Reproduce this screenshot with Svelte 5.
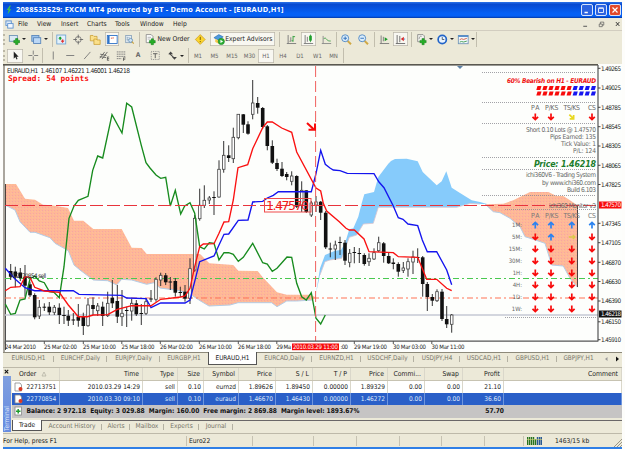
<script>
  // Toolbar entries: x is the left edge and w the width, both in window pixels.
  const bar1 = [
    { k: 'grip', x: 3, w: 2 }, { k: 'newchart', x: 7, w: 14 }, { k: 'drop', x: 21, w: 5 },
    { k: 'profiles', x: 29, w: 14 }, { k: 'drop', x: 43, w: 5 }, { k: 'sep', x: 52, w: 2 },
    { k: 'market', x: 54, w: 14 }, { k: 'target', x: 71, w: 14 }, { k: 'folders', x: 88, w: 14 },
    { k: 'nav', x: 105, w: 14, on: true }, { k: 'tester', x: 122, w: 14 }, { k: 'sep', x: 139, w: 2 },
    { k: 'order', x: 143, w: 14 }, { k: 'text', x: 157, w: 33, t: 'New Order' }, { k: 'warn', x: 193, w: 14 },
    { k: 'ea', x: 210, w: 65, on: true, t: 'Expert Advisors' },
    { k: 'sep', x: 279, w: 2 }, { k: 'bars', x: 284, w: 14 }, { k: 'candles', x: 301, w: 15, on: true },
    { k: 'linechart', x: 319, w: 14 }, { k: 'sep', x: 336, w: 2 }, { k: 'zoomin', x: 339, w: 14 },
    { k: 'zoomout', x: 356, w: 14 }, { k: 'sep', x: 374, w: 2 }, { k: 'scroll', x: 377, w: 14 },
    { k: 'shift', x: 393, w: 15, on: true }, { k: 'sep', x: 411, w: 2 }, { k: 'indic', x: 414, w: 14 },
    { k: 'drop', x: 428, w: 5 }, { k: 'clock', x: 435, w: 14 }, { k: 'drop', x: 449, w: 5 },
    { k: 'template', x: 456, w: 14 }, { k: 'drop', x: 470, w: 5 }, { k: 'sep', x: 476, w: 2 }
  ];
  const bar2 = [
    { k: 'grip', x: 3, w: 2 }, { k: 'cursor', x: 7, w: 16, on: true }, { k: 'cross', x: 26, w: 14 },
    { k: 'sep', x: 42, w: 2 }, { k: 'vline', x: 46, w: 14 }, { k: 'hline', x: 63, w: 14 },
    { k: 'trend', x: 80, w: 14 }, { k: 'channel', x: 97, w: 14 }, { k: 'fibo', x: 114, w: 14 },
    { k: 'text', x: 131, w: 14, t: 'A', b: true }, { k: 'label', x: 148, w: 14 }, { k: 'arrows', x: 165, w: 14 },
    { k: 'drop', x: 179, w: 5 }, { k: 'sep', x: 188, w: 2 },
    { k: 'tf', x: 190, w: 16, t: 'M1' }, { k: 'tf', x: 206, w: 17, t: 'M5' }, { k: 'tf', x: 223, w: 18, t: 'M15' },
    { k: 'tf', x: 241, w: 17, t: 'M30' }, { k: 'tf', x: 258, w: 16, t: 'H1', on: true }, { k: 'tf', x: 275, w: 16, t: 'H4' },
    { k: 'tf', x: 292, w: 16, t: 'D1' }, { k: 'tf', x: 309, w: 17, t: 'W1' }, { k: 'tf', x: 326, w: 15, t: 'MN' },
    { k: 'sep', x: 343, w: 2 }
  ];
  const gapped = (items, start = 3) => items.map((it, i) => ({
    ...it, gap: it.x - (i ? items[i - 1].x + items[i - 1].w : start)
  }));

  // time position, high, low, body top, body bottom, filled
  const candles = [
    [10.7,264,280,271,276.7,1],[15.3,266.7,287.3,271.5,276.7,1],[20.3,268,281,272.5,278,1],[25,265,296.7,277.3,285.7,1],
    [30,281.7,297,284.3,295.3,1],[34.7,293.3,319.3,295,317.3,1],[39.3,300,319,307.3,316,0],[44.3,303.3,311,306.7,307.7,1],
    [49.3,302,315,306.7,312.3,1],[54.3,305,315,307.3,312.3,0],[59.3,303.3,324,307.7,315,1],[64,306.7,324,315,316,1],
    [68.3,310,326,315.7,320.7,1],[73.3,313,325,319.5,320.5,1],[78.3,304,326.7,316.7,320.7,1],[83.3,312.7,335,316.7,326,1],
    [88,298,326.7,305,325.7,0],[93,297.3,315,305,309,1],[97.7,303,316,306,310.7,0],[102.7,301.7,326,306.7,316,1],
    [107.7,291.7,317,303.3,315.7,0],[112.3,280,308,297.7,303.3,1],[117.3,285,323,301,316.7,1],[122,290,326,313.3,316.7,0],
    [126.7,306.7,327,310,311,1],[131.7,299,320.7,303.3,311,0],[136.3,300,316,303.3,314.3,1],[141.3,304,325,313,314,1],
    [146,298,315,301.7,313.3,0],[151,290,302,298.5,299.5,1],[156,277.3,301.7,279.3,299.3,0],[160.7,272.7,286,275.3,280,0],
    [165.7,273,285,275.3,282.3,1],[170.3,277,290,281.5,282.5,1],[175.3,278,296.7,281,292.7,1],[180.3,286.7,297,292,293,1],
    [185,285,301.7,291.7,298.7,1],[190,258.3,304,268.7,298.3,0],[194.7,215,271.7,218.3,270,0],[199.7,188.7,220.7,205.3,218.7,0],
    [204.3,185.3,208,200.3,205.3,0],[209.3,196,204,198,200,0],[214,191.3,215,197,198,1],[219,160.3,197.7,169.3,197,0],
    [223.7,141,172.7,155.3,169.3,0],[228.7,145.3,162,155.3,158,1],[233.3,127.7,163,137.3,158.7,0],[238.3,114.3,139.3,114.3,137.7,0],
    [243.3,114,133,114.3,124.7,1],[248,121.3,134.7,124.3,133.7,1],[252.7,80,119.3,103,114.3,0],[257.7,97,113.7,103,107.7,1],
    [262.7,107,128.7,108,127,1],[267.3,125,150.3,126.3,146,1],[272.3,140.3,164,146,162.7,1],[277,158.7,171,163,169,1],
    [282,162,177,168.7,176,1],[286.7,172,180.3,174,177,1],[291.7,171.3,185.3,176,181.3,0],[296.7,175.3,208,176,206.7,1],
    [301.7,181.3,212,190.3,205,0],[306.3,190.3,213,190.3,212,1],[311.3,201,217,203,215,0],[316,196,212,202,205,0],
    [320.7,201,220,201.7,212.7,1],[325.7,211,249,212.7,247.3,1],[330.3,242.7,257.3,248.5,249.5,1],[335.3,240.7,260,245,249,0],
    [340,236.7,255,242,243,1],[345,240,265,242.7,260.7,1],[349.7,249,267.3,253.3,262.3,0],[354.3,247,263.3,252,253,1],
    [359.3,248,263,253,254,1],[364.3,253.3,265.7,255,264,1],[369,253.3,266,258.3,261.7,0],[374,248.3,260,252.7,259,0],
    [378.7,236.7,252,242.7,250.7,0],[383.7,242,262.7,243.3,256,1],[388.7,252,264,256,263.3,1],[393.3,258.3,269.3,262.5,264,1],
    [398.3,262.3,276.7,264,271.7,1],[403.3,262,273,268,270.3,0],[408,258.3,276.7,261.7,269,0],[413,250.7,274,257,262,0],
    [417.7,248.3,263,257,258,1],[422.7,256,296.7,257.3,284,1],[427.3,282,311,284,297,1],[432.3,294,306,297,300.7,1],
    [437,289.3,302,291.7,300.7,0],[442,289,321,291.7,319,1],[446.7,306,328,319,324.3,1],[451.7,314,332.7,315,324.3,0]
  ];

  const chikou = '5.3,304 10.7,314.3 15.3,313.3 20,300 25,299 30,279 34.7,276 39.3,281 44.3,282.7 49.3,291.7 54,292.3 59.3,297.7 64,266.7 69,218.3 74,206 78.3,200.3 88,196.3 92.7,170.3 97.7,156 102.7,158 112,114.7 122,133 126.7,103.3 131.7,107 141.3,145.3 146,162.7 150,168 156,175 160.7,178.3 165.7,177.3 170.3,206 175.3,190.3 180.7,214 184.7,206 190,202.7 194.7,213.3 199.7,246.7 204.3,249 209.3,242.7 214,243.3 219,260 224,252.7 228.7,252.7 233.3,254.3 238.3,261.3 243.3,257.3 252.7,243.3 262.7,262.7 267.3,264 272.3,271.3 277,268.3 287,257 291.7,257.3 296.7,283.3 301.7,296.7 306.3,300 311.3,292.7 316,318.3 320.7,324 325.3,315';
  const tenkan = '5.3,290.7 10.7,287.3 20,286.7 25,276.7 30,277.3 34.7,287.3 44.3,291 59.3,292.3 68.3,305 78.3,316.7 87.3,316.7 93.3,315 107.7,314.7 117.3,309.3 131.7,305.7 151,305.7 160.7,299.3 180.7,297 185,296 190,288.3 194.7,266.7 199.7,246.7 203.3,244 214,243.7 219,233.3 224,222 228.7,221.7 233.3,200 238,167.7 247.7,164.7 252.7,148.7 262.7,127.7 267.3,122 272.3,122 281.7,128 291.7,132.3 296.7,152 316,188 320.7,191 323.3,203.3 326.7,211 339.3,221.7 346,228.3 349.3,230 354.3,230 364,239 369,251.7 393.3,252.7 398.3,256.7 417.7,257.3 426.7,279.3 436.7,279.3 446.7,288.3 451.7,290.7';
  const kijun = '5.3,268.3 15.3,279.3 25,287.7 34.7,290.7 73.3,290.7 79,294.3 121.7,295.3 126.7,298 146,298.7 151,307.7 160.7,303 185,303 190,300 199.7,261.7 214,256 219,245 224,234.3 228.7,234 238.3,220.3 248,220 252.7,202 262.7,201.3 267.3,198 273.3,195.3 278.3,191.7 311.3,191.7 316,173.7 320.7,150.3 325.3,164.3 330,168 333.3,170 340,170.7 347.3,173.3 374,173.7 379,182 384,187.7 393.3,206 398.3,217.7 403,219.3 408,224 417.7,225.7 422.3,240 427.3,251.7 436.7,251.7 446.7,270 451.7,284.7';
  const senkouTop = '5,184 16,184 25,198.7 35,199.7 43,204.7 52,205.3 68,208 74,220.7 83.3,220.7 93.3,229 121.7,229 131.7,247.7 141.7,248 146.7,254 200,254 209.3,263.3 233.3,265 238.3,270.7 257.7,271 262.7,277.3 277,292.3 286.7,294.7 311,294.7 315,297';
  const senkouLow = '313,300 296.7,301 286.7,301 277,306.7 271.7,302.7 238,302.7 230,305 209,306 200,300.7 190,294 180,290.7 160,288 154,282.7 146.7,284.3 131.7,280 121.7,279.3 116.7,285 107.7,280.7 93.3,280 80,270 74,265 68.3,250.7 55,243.3 50,237.7 35,232.3 30,232.3 20,221.7 15,210 5,205';
  const blueTop = '316,293.3 320,268.3 325,255 335,250.7 341,250 345,243.3 349.3,229.3 353.3,228.3 358.3,216.7 361.7,203.3 364.3,194.3 374,192 378.3,177 388.3,163.7 391,161 395,159 406.7,158.7 417.7,161.3 422.7,172 436.7,185.3 441.7,181.3 446.3,171.3 451.7,187.7 460,193 471.7,200.3 480,202 487,204';
  const blueLow = '480,204 470,203.5 456.7,207.3 378.3,207.3 373.3,223.3 363.3,224 356.7,235 349.3,237.3 341.7,258.3 330,260 325,261.7 320,275';
  const pinkTop = '485,204.3 503.3,203.7 513.3,200.3 530,192 548.3,192 556.7,196 563.3,196 570,200.3 577.5,205.3 577.5,287.3';
  const pinkLow = '577.5,287.3 570,278.3 563.3,266 551.7,265 545,243.3 533.3,239.3 525,236.7 520,226.7 510,218.3 500,212.7 493.3,211.7 485,204';

  const prices = [
    ['1.49265', 68.3], ['1.49025', 88], ['1.48785', 107.3], ['1.48545', 126.7], ['1.48305', 146], ['1.48065', 165.3],
    ['1.47825', 184.5], ['1.47345', 223.3], ['1.47105', 242.7], ['1.46870', 262.3], ['1.46630', 281.5], ['1.46390', 301],
    ['1.46150', 321.8], ['1.45910', 339.7]
  ];
  const dates = [
    ['24 Mar 2010', 5, 31], ['25 Mar 02:00', 44, 33], ['25 Mar 10:00', 83, 33], ['25 Mar 18:00', 121.5, 33],
    ['26 Mar 02:00', 160, 33], ['26 Mar 10:00', 199, 33], ['26 Mar 18:00', 238, 33], ['29 Ma', 276.5, 14.5],
    [':00', 340.5, 7.5], ['29 Mar 19:00', 354, 33], ['30 Mar 03:00', 393, 33], ['30 Mar 11:00', 431.5, 33]
  ];
  const info = [
    ['Short 0.10 Lots @ 1.47570', 526, 131.7], ['Pips Earned: 135', 550, 139], ['Tick Value: 1', 561, 146], ['P/L: 124', 573, 153],
    ['ichi360V6 - Trading System', 526, 177.3], ['by www.ichi360.com', 542, 184.5], ['Build 6.103', 567, 192], ['ichi360 Monitor v3', 549, 208]
  ];
  const heads = [['PA', 531, 8.5], ['P/KS', 545, 13.5], ['TS/KS', 563.5, 16.5], ['CS', 588, 8]];
  const rules = [[482, 72.5], [482, 102.5], [482, 123.5], [482, 157.5], [482, 169.5], [482, 195.5], [505, 209.5], [505, 317.5]];
  const cols = [535.3, 551, 571.8, 592];
  const monitor = [
    ['1M:', 225, 'uuuu'], ['5M:', 237, 'dusd'], ['15M:', 249, 'dddd'], ['30M:', 261, 'dddd'],
    ['1H:', 273, 'dddd'], ['4H:', 285, 'dddd'], ['1D:', 297, 'dddd'], ['1W:', 309, 'dddd']
  ];

  const tabs = [
    ['EURUSD,H1', 51], ['EURCHF,Daily', 53], ['EURJPY,Daily', 53], ['EURGBP,H1', 48], ['EURAUD,H1', 49, true],
    ['EURCAD,Daily', 55], ['EURNZD,H1', 49], ['USDCHF,Daily', 53], ['USDJPY,H4', 46], ['USDCAD,H1', 48], ['GBPUSD,H1', 49], ['GBPJPY,H1', 43]
  ];
  const head = ['Order', 'Time', 'Type', 'Size', 'Symbol', 'Price', 'S / L', 'T / P', 'Price', 'Commi...', 'Swap', 'Profit', 'Comment'];
  const rows = [
    ['22713751', '2010.03.29 14:29', 'sell', '0.10', 'eurnzd', '1.89626', '1.89450', '0.00000', '1.89329', '0.00', '0.00', '21.10', ''],
    ['22770854', '2010.03.30 09:10', 'sell', '0.10', 'euraud', '1.46670', '1.46430', '0.00000', '1.46272', '0.00', '0.00', '36.60', '']
  ];
  const statusCells = [184, 66, 61, 43, 43, 42, 43, 39];
</script>

{#snippet icon(k)}
  <svg class="icon" viewBox="0 0 14 14">
    {#if k === 'newchart'}
      <rect x="1.500" y="2.500" width="9" height="6.500" fill="#dbe9f5" stroke="#6e93b5" /><path d="M6.500 8h2V6H11v2h2v2.600h-2v2H8.500v-2h-2z" fill="#27ae27" stroke="#0c7a14" stroke-width=".6" />
    {:else if k === 'profiles'}
      <rect x="2" y="2.500" width="8" height="6.500" fill="#9cc4ee" stroke="#5a87bb" /><rect x="4" y="5" width="8" height="6.500" fill="#bcd8f6" stroke="#5a87bb" />
    {:else if k === 'market'}
      <rect x="2" y="2" width="10" height="10" fill="#e3f1fb" stroke="#72a5d5" /><path d="M3.600 6l2.200-2.500L8 6H6.700v1.300H4.900V6z" fill="#129a22" /><path d="M6.300 8.500L8.500 11l2.200-2.500H9.400V7H7.600v1.500z" fill="#e03434" />
    {:else if k === 'target'}
      <circle cx="7" cy="7" r="3.300" fill="none" stroke="#777" /><path d="M7 1.500v4M7 8.500v4M1.500 7h4M8.500 7h4" stroke="#666" />
    {:else if k === 'folders'}
      <path d="M1.500 2.500h3l1 1H9v5H1.500z" fill="#fbe08a" stroke="#c69a2a" stroke-width=".8" /><path d="M5.500 6.500h2.500l1 1h3.500v5h-7z" fill="#fbe08a" stroke="#c69a2a" stroke-width=".8" />
    {:else if k === 'nav'}
      <rect x="1.500" y="2.500" width="11" height="9" fill="#fff" stroke="#2d72c8" /><path d="M3 3v8" stroke="#2d72c8" stroke-width="2" /><path d="M5.500 5.500h1.500M8 4.500v1.500" stroke="#e05030" />
    {:else if k === 'tester'}
      <rect x="3" y="2.500" width="6.500" height="8" fill="#e5eef5" stroke="#8fa6bb" /><path d="M4 5h4M4 7h3M5 4v5" stroke="#8fa6bb" stroke-width=".6" /><circle cx="8.500" cy="8" r="2.200" fill="#cfe4f5" stroke="#6b93b8" /><path d="M10 9.500l2 2.200" stroke="#c9a13c" stroke-width="1.300" />
    {:else if k === 'order'}
      <path d="M2.500 1.500h5.500l2 2v7H2.500z" fill="#fff" stroke="#777" stroke-width=".8" /><path d="M4 4.500h4M4 6.500h3" stroke="#888" stroke-width=".7" /><path d="M6 8.200h2V6.200h2.600v2h2v2.600h-2v2H8v-2H6z" fill="#27ae27" stroke="#0c7a14" stroke-width=".5" />
    {:else if k === 'warn'}
      <path d="M7 1.500L12.500 7 7 12.500 1.500 7z" fill="#fbd52e" stroke="#c9982a" stroke-width=".8" /><path d="M7 4v3.500M7 8.700v1.300" stroke="#7a5a00" stroke-width="1.100" />
    {:else if k === 'ea'}
      <path d="M1 5l5.500-3.500L11.500 4 6.500 8z" fill="#4e9ade" stroke="#2665a6" stroke-width=".6" /><path d="M2.500 6.300v3.500l4 2V8z" fill="#f2c84c" /><circle cx="9.300" cy="9.200" r="3.500" fill="#2eaf36" stroke="#0f7d1b" stroke-width=".6" /><path d="M8.300 7.400l3 1.800-3 1.800z" fill="#fff" />
    {:else if k === 'bars'}
      <path d="M3.500 2v9.500M2 11.500h10.500M5 9h1.500V4.500" fill="none" stroke="#777" /><path d="M9 3v6.500M9 3.800h2.300M7.300 8.500H9" stroke="#2c9c38" />
    {:else if k === 'candles'}
      <path d="M3.500 2v9.500M2 11.500h10.500M6 4v5.500" fill="none" stroke="#777" /><path d="M9.500 1.500V10" stroke="#178a22" stroke-width=".8" /><rect x="8" y="2.500" width="3" height="6" rx="1" fill="#1fa02c" />
    {:else if k === 'linechart'}
      <path d="M3.500 3v8.500M2 11.500h10.500" stroke="#888" /><path d="M4 6.500c2-2.500 3 0 4 1s2 1.200 4 1.200" fill="none" stroke="#3b9d44" />
    {:else if k === 'zoomin' || k === 'zoomout'}
      <path d="M8.500 8.500l3.800 3.800" stroke="#d1a843" stroke-width="2.200" /><circle cx="5.800" cy="5.600" r="3.900" fill="#d9ecfb" stroke="#4e86c2" /><path d="M3.800 5.600h4" stroke="#2a6bb8" />
      {#if k === 'zoomin'}<path d="M5.800 3.600v4" stroke="#2a6bb8" />{/if}
    {:else if k === 'scroll'}
      <path d="M3.500 2.500v9M2 11.500h10.500M6 4v5" stroke="#777" /><path d="M7.500 4.500l3.500 2.300L7.500 9z" fill="#1e9a2a" />
    {:else if k === 'shift'}
      <path d="M3.500 2v9.500M2 11.500h10.500M6.500 3v7" stroke="#666" /><path d="M10.500 6.500h2" stroke="#3a76d0" /><path d="M11 4v5L7.600 6.500z" fill="#d92c2c" />
    {:else if k === 'indic'}
      <path d="M3 1.500h6l1.500 1.500v6.500H3z" fill="#f2f2ee" stroke="#777" stroke-width=".8" /><path d="M4.500 6.500c1-4 1.500-3 3-3" fill="none" stroke="#777" stroke-width=".7" /><path d="M5.500 8h2.300V6h2.500v2h2.200v2.600h-2.200v2.200H7.800v-2.200H5.500z" fill="#27ae27" stroke="#0c7a14" stroke-width=".5" />
    {:else if k === 'clock'}
      <circle cx="7" cy="7" r="4.600" fill="#e9f3fd" stroke="#2264c8" stroke-width="1.900" /><path d="M7 4.300V7h2.300" fill="none" stroke="#334455" stroke-width=".9" />
    {:else if k === 'template'}
      <rect x="1.500" y="2.500" width="11" height="9.200" fill="#f3f8fd" stroke="#7396b8" /><path d="M1.500 3.200h11" stroke="#4d86c6" stroke-width="1.800" /><path d="M3 7.200l2-1 2.500.7 3.500-1.200" fill="none" stroke="#d35a3a" /><path d="M3 9.900l2-.6 2.500.5 3.500-1" fill="none" stroke="#3c9a4b" />
    {:else if k === 'cursor'}
      <path d="M5.300 2.500v8l1.800-1.800 1.300 2.900 1.200-.6-1.200-2.700h2.400z" fill="#222" />
    {:else if k === 'cross'}
      <path d="M7 1.500v4.500M7 8v4.500M1.500 7H6M8 7h4.500" stroke="#777" />
    {:else if k === 'vline'}<path d="M7 2.500v9" stroke="#777" />
    {:else if k === 'hline'}<path d="M2.500 7h9" stroke="#777" />
    {:else if k === 'trend'}<path d="M3.500 11l7-8" stroke="#777" />
    {:else if k === 'channel'}
      <path d="M2 10l5.500-7M4.500 11l6-8M2.500 5.500l7 1.500M2 8.300l7 1" stroke="#555" stroke-width=".9" /><path d="M10.500 8.500v4M10.500 10.500h2M10.500 8.700h2M10.500 12.300h2" stroke="#444" stroke-width=".8" />
    {:else if k === 'fibo'}
      <path d="M2 3h10M2 5.500h10M2 8h10M2 10.500h5" stroke="#777" stroke-dasharray="1.500 .5" /><path d="M9.500 9.500v3.500M9.500 9.700h2.300M9.500 11.200h2" stroke="#444" stroke-width=".8" />
    {:else if k === 'label'}
      <rect x="2.500" y="2.500" width="9" height="9" fill="none" stroke="#888" stroke-dasharray="1 1" /><path d="M4.500 5h5M7 5v5" stroke="#555" />
    {:else if k === 'arrows'}
      <path d="M2.500 5.500L5.200 2.500l2.700 3z" fill="#444" /><path d="M4 5l4.500 4" stroke="#444" stroke-width="1.200" /><path d="M6.800 8.700h5.400L9.500 11.700z" fill="#444" />
    {/if}
  </svg>
{/snippet}

{#snippet toolbar(items)}
  <div class="toolbar">
    {#each gapped(items) as it}
      <div class="tool {it.k}" class:on={it.on} class:bold={it.b} style="width:{it.w}px;margin-left:{it.gap}px">
        {#if it.k === 'drop'}<i></i>
        {:else if it.k === 'text' || it.k === 'tf'}<span>{it.t}</span>
        {:else if it.k !== 'sep' && it.k !== 'grip'}
          {@render icon(it.k)}
          {#if it.t}<span>{it.t}</span>{/if}
        {/if}
      </div>
    {/each}
  </div>
{/snippet}

{#snippet signal(x, y, dir)}
  {#if dir === 's'}
    <path d="M{x - 3} {y}h5M{x + 1} {y - 2}l2 2l-2 2" stroke="#dcc94a" stroke-width="1.5" fill="none" />
  {:else}
    <path transform="translate({x} {y}) rotate({dir === 'u' ? 180 : dir === 'e' ? -45 : 0})"
      d="M0-3.5V2M-2.8-.2L0 2.6L2.8-.2" fill="none" stroke-width="1.7"
      stroke={dir === 'u' ? '#2b83f0' : dir === 'e' ? '#e8d820' : '#f80b0b'} />
  {/if}
{/snippet}

<div class="screen">
  <div class="window">
    <header class="title">
      <svg class="logo" viewBox="0 0 8 12"><path d="M5 0L1 6h2.500L2 12l5-7H4.500L6.500 0z" fill="#3fbf4c" /></svg>
      <span>2088533529: FXCM MT4 powered by BT - Demo Account - [EURAUD,H1]</span>
      <div class="buttons">
        <svg class="wb" viewBox="0 0 12 12"><path d="M3 9h4" stroke="#fff" stroke-width="1.6" /></svg>
        <svg class="wb" viewBox="0 0 12 12"><path d="M3 4h6v5H3zM3 3.4h6" fill="none" stroke="#fff" /></svg>
        <svg class="wb close" viewBox="0 0 12 12"><path d="M3 3l6 6M9 3l-6 6" stroke="#fff" stroke-width="1.4" /></svg>
      </div>
    </header>

    <nav class="menu">
      <svg class="menuicon" viewBox="0 0 10 10"><rect x="1" y="1" width="6" height="5" fill="#dceafa" stroke="#5c91cf" /><rect x="3" y="4" width="6" height="5" fill="#f4f9ff" stroke="#5c91cf" /></svg>
      <span style="width:19px">File</span><span style="width:24px">View</span><span style="width:26px">Insert</span><span style="width:28px">Charts</span><span style="width:25px">Tools</span><span style="width:33px">Window</span><span>Help</span>
      <svg class="mdi" viewBox="0 0 54 10"><path d="M3 8h5" stroke="#555" stroke-width="1.300" /><path d="M24 5h4v3.500h-4zM25.500 5V2.500h4.500v4h-2" fill="none" stroke="#555" stroke-width=".9" /><path d="M46 2.500l4.500 5M50.500 2.500l-4.500 5" stroke="#333" stroke-width="1.300" /></svg>
    </nav>

    {@render toolbar(bar1)}
    {@render toolbar(bar2)}

    <svg class="chart" viewBox="3 64 619 288" width="619" height="288">
      <defs>
        <pattern id="peach" width="3" height="3" patternUnits="userSpaceOnUse"><rect width="3" height="3" fill="#ffb896" /><rect width="1" height="1" fill="#f5a6a4" /><rect x="2" y="1" width="1" height="1" fill="#fbc09c" /></pattern>
      </defs>
      <rect x="3" y="64" width="619" height="288" fill="#fdfefc" />
      <rect x="3" y="64" width="2" height="288" fill="#aaa69e" />
      <rect x="3" y="64" width="595" height="1.600" fill="#5a5850" />

      <polygon points="{senkouTop} {senkouLow}" fill="url(#peach)" />
      <polyline points={senkouLow} fill="none" stroke="#b4cde6" />
      <polygon points="{blueTop} {blueLow}" fill="#86cbfb" />
      <polyline points={blueLow} fill="none" stroke="#d9c5cf" stroke-width=".8" />
      <polygon points="{pinkTop} {pinkLow}" fill="url(#peach)" />
      <polyline points={pinkLow} fill="none" stroke="#b4cde6" />
      <path d="M577.500 205V287" stroke="#4b4040" />
      <path d="M5.500 184V350" stroke="#222" stroke-width=".8" />

      <path d="M5 315H598" stroke="#c4c8d4" stroke-width="1.300" />
      <path d="M5 278.500H598" stroke="#49c950" stroke-dasharray="6 3 2 3" />
      <path d="M5 298H598" stroke="#ff7355" stroke-dasharray="6 3 2 3" />

      {#each candles as [x, h, l, t, b, full]}
        <path d="M{x} {h}V{l}" stroke="#333" />
        <rect x={x - (full ? 1.8 : 1.3)} y={t} width={full ? 3.6 : 2.6} height={Math.max(b - t, 1)} fill={full ? '#111' : '#fff'} stroke={full ? 'none' : '#444'} stroke-width=".8" />
      {/each}

      <g fill="none" stroke-width="1.350">
        <polyline points={chikou} stroke="#178b1e" />
        <polyline points={kijun} stroke="#1414ee" />
        <polyline points={tenkan} stroke="#fa1010" />
      </g>

      <path d="M5 205.500H598" stroke="#e8343c" stroke-dasharray="13 4" />
      <path d="M315.600 66V341" stroke="#f0605e" stroke-dasharray="11 4" />
      <rect x="264.500" y="198.500" width="46.500" height="13.500" fill="none" stroke="#f04a4a" />
      <text x="266" y="210.300" textLength="43" font-size="12.500" fill="#f01c1c" class="wide">1.47570</text>
      <path d="M307 123l6.500 6M315 123.500v6.300h-6.500" fill="none" stroke="#f80b0b" stroke-width="2" />
      <path d="M457 66h6l-3 3z" fill="#5e82a6" />

      <text x="7" y="72.700" textLength="123" font-size="6.600" fill="#222">EURAUD,H1&#160; 1.46107 1.46221 1.46001 1.46218</text>
      <text x="8" y="80.500" textLength="81" font-size="7.800" fill="#f80b0b" class="mono">Spread: 54 points</text>
      <text x="9" y="277.500" textLength="37" font-size="6.200" fill="#222">#22770854 sell</text>

      {#each rules as [x, y]}<path d="M{x} {y}H596" stroke="#8a8a90" stroke-width=".8" stroke-dasharray="1 1" />{/each}
      <text x="507" y="82.500" textLength="89" font-size="6.500" fill="#f01010" class="bi narrow">60% Bearish on H1 - EURAUD</text>
      {#each Array(20) as _, i}
        <path transform="translate({536 + (i % 10) * 6.050} {i < 10 ? 86 : 91.500})" d="M1.500 0h4l-1.200 4h-4z" fill={i % 10 < 6 ? '#f80b0b' : '#1616f0'} />
      {/each}
      {#each heads as [t, x, w]}
        <text {x} y="110" textLength={w} font-size="6.900" fill="#666">{t}</text>
        <text {x} y="218" textLength={w} font-size="6.900" fill="#777">{t}</text>
      {/each}
      {@render signal(cols[0], 117, 'd')}
      {@render signal(cols[1], 117, 'd')}
      {@render signal(cols[2], 117, 'e')}
      {@render signal(cols[3], 117, 'd')}
      {#each info as [t, x, y]}<text {x} {y} textLength={596 - x} font-size="6.600" fill="#666">{t}</text>{/each}
      <text x="534" y="167" textLength="62" font-size="8.800" fill="#1c7d2c" class="bi narrow">Price: 1.46218</text>
      {#each monitor as [t, y, s]}
        <text x="522" y={y + 2.300} text-anchor="end" font-size="6" fill="#666">{t}</text>
        {#each cols as x, i}{@render signal(x, y, s[i])}{/each}
      {/each}

      <path d="M598 65V341.500M5 341.200H598" stroke="#555" stroke-width="1.200" fill="none" />
      {#each prices as [t, y]}
        <path d="M598 {y}h2.500" stroke="#444" />
        <text x="601" y={y + 2.400} textLength="20" font-size="6.300" fill="#222">{t}</text>
      {/each}
      <rect x="599" y="201.500" width="22.500" height="7" fill="#f80b0b" />
      <text x="601" y="207.400" textLength="20" font-size="6.300" fill="#fff">1.47570</text>
      <rect x="599" y="310.500" width="22.500" height="7" fill="#111" />
      <text x="601" y="316.200" textLength="20" font-size="6.200" fill="#fff">1.46218</text>
      {#each dates as [t, x, w]}
        {#if t !== ':00'}<path d="M{x + .3} 341v3" stroke="#555" />{/if}
        <text {x} y="348.600" textLength={w} font-size="6" fill="#222">{t}</text>
      {/each}
      <rect x="292" y="343.500" width="47" height="6.700" fill="#f80b0b" />
      <text x="293" y="349" textLength="45" font-size="6" fill="#fff">2010.03.29 11:00</text>
    </svg>

    <div class="charttabs">
      {#each tabs as [t, w, on], i}
        <div class="ctab" class:on class:bar={i !== 3 && !on && i !== 11} style="width:{w}px">{t}</div>
      {/each}
      <svg class="scrollers" viewBox="0 0 18 8"><path d="M4.500 2v4L2 4z" fill="#999" /><path d="M13 1.500v5L16 4z" fill="#111" /></svg>
    </div>

    <section class="terminal">
      <aside>
        <svg viewBox="0 0 8 8"><path d="M2 1.500l4 4M6 1.500l-4 4" stroke="#111" stroke-width="1.200" /></svg>
        <div class="strip"><span>Terminal</span></div>
      </aside>
      <div class="body">
        <div class="row header">
          {#each head as t, i}<div class="c">{t}{#if i === 0}<svg class="sort" viewBox="0 0 6 6"><path d="M1 5l2-4 2 4z" fill="none" stroke="#b5b2a4" stroke-width=".8" /></svg>{/if}</div>{/each}
        </div>
        {#each rows as r, n}
          <div class="row" class:sel={n === 1}>
            {#each r as t, i}
              <div class="c">
                {#if i === 0}<svg class="doc" viewBox="0 0 9 10"><path d="M1 1h5l1.500 2v6H1z" fill="#fff" stroke="#888" stroke-width=".8" /><circle cx="6.500" cy="7" r="2" fill="#dd3a22" /></svg>{/if}{t}
              </div>
            {/each}
          </div>
        {/each}
        <div class="row sum">
          <svg class="doc" viewBox="0 0 9 10"><rect x="1" y="1" width="6.500" height="8" fill="#fff" stroke="#888" stroke-width=".8" /><path d="M4.200 3v4.500M2 5.200h4.500" stroke="#1f9c2c" stroke-width="1.500" /></svg>
          <b>Balance: 2 972.18&nbsp; Equity: 3 029.88&nbsp; Margin: 160.00&nbsp; Free margin: 2 869.88&nbsp; Margin level: 1893.67%</b>
          <b class="total">57.70</b>
        </div>
        <div class="ttabs">
          <div class="on" style="width:30px">Trade</div>
          <div style="width:60px">Account History</div><div style="width:28px">Alerts</div><div style="width:34px">Mailbox</div><div style="width:35px">Experts</div><div style="width:34px">Journal</div>
        </div>
      </div>
    </section>

    <footer class="status">
      {#each statusCells as w, i}<div style="width:{w}px">{i === 0 ? 'For Help, press F1' : i === 1 ? 'Euro22' : ''}</div>{/each}
      <div class="net">
        <svg viewBox="0 0 15 8"><path d="M.5 0v8M2.500 0v8M4.500 0v8M6.500 0v8M8.500 2v6" stroke="#27731e" stroke-width="1.400" /><path d="M10.500 0v8M12.500 0v8M14.300 0v8" stroke="#2a5a92" stroke-width="1.400" /><path d="M0 2.500h15" stroke="#cfd36a" stroke-width=".6" /></svg>
        <span>1463/15 kb</span>
      </div>
      <svg class="size" viewBox="0 0 9 9"><path d="M9 1L1 9M9 4L4 9M9 7L7 9" stroke="#999585" /></svg>
    </footer>
  </div>
  <div class="taskbar"></div>
</div>

<style>
  :global(body) { background: #fff; overflow: hidden; }
  .screen { width: 625px; height: 449px; box-sizing: border-box; padding: 2px 3px 0; background: #fdfdfb; overflow: hidden; display: flex; flex-direction: column;
    font: 6.6px/1 "DejaVu Sans Condensed", "DejaVu Sans", sans-serif; color: #222; white-space: nowrap; }
  .window { height: 445px; width: 619px; background: #ece9d8; display: flex; flex-direction: column; flex: none; }
  .taskbar { height: 2px; background: #2f7fe6; flex: none; }

  .title { height: 16px; flex: none; display: flex; align-items: center; background: linear-gradient(#2b72e8, #0749d0 15%, #0560f5 70%, #0560f5 88%, #0238a8);
    color: #fff; font-weight: bold; font-size: 7.4px; font-family: "Open Sans", "DejaVu Sans Condensed", sans-serif; letter-spacing: .21px; }
  .logo { width: 6px; height: 10px; margin: 0 4px 0 3px; }
  .buttons { margin-left: auto; display: flex; gap: 2px; padding-right: 1px; }
  .wb { width: 12px; height: 12px; box-sizing: border-box; border: .6px solid #d6e3fb; border-radius: 2px; background: #2c63e0; }
  .close { background: #e2492b; }

  .menu { height: 13px; flex: none; display: flex; align-items: center; box-sizing: border-box; border-bottom: 1px solid #d2cdc0; font-size: 6.7px; }
  .menuicon { width: 9px; height: 9px; margin: 0 4px 0 2px; }
  .mdi { width: 41px; height: 8px; margin-left: auto; }

  .toolbar { height: 16.5px; flex: none; display: flex; align-items: center; font-size: 6.7px; }
  .tool { height: 14px; box-sizing: border-box; display: flex; align-items: center; justify-content: center; flex: none; }
  .icon { width: 12.500px; height: 13px; flex: none; }
  .on.tool { background: #f8f7f1; box-shadow: inset 0 0 0 .7px #b9b5a8; }
  .sep { border-left: 1px solid #c2beae; height: 15px; }
  .grip { border-left: 2px dotted #bbb7a6; height: 11px; }
  .drop i { border: 2px solid transparent; border-top-color: #222; border-bottom: 0; width: 0; height: 0; }
  .tf { color: #666; font-size: 6px; }
  .bold { font-weight: bold; color: #666; }

  .chart { display: block; flex: none; font-family: "DejaVu Sans Condensed", "DejaVu Sans", sans-serif; }
  .wide { font-family: "DejaVu Sans", sans-serif; }
  .mono { font-family: "DejaVu Sans Mono", monospace; font-weight: bold; }
  .bi { font-weight: bold; font-style: italic; }
  .narrow { font-family: "DejaVu Sans Condensed", "DejaVu Sans", sans-serif; }

  .charttabs { height: 15px; flex: none; display: flex; align-items: flex-start; box-sizing: border-box; border-top: 1px solid #8d897a; color: #77756a; font-size: 6.4px; }
  .ctab { height: 12px; line-height: 11px; text-align: center; flex: none; }
  .ctab.on { background: #fff; color: #111; border: solid #555; border-width: 0 1px 1px; box-sizing: border-box; margin-top: -1px; height: 13px; line-height: 13px; }
  .ctab.bar { background: linear-gradient(#a5a294, #a5a294) right 3px / .8px 6px no-repeat; }
  .scrollers { width: 18px; height: 8px; margin: 2px 1px 0 auto; }

  .terminal { height: 65px; flex: none; display: flex; border-top: 1px solid #bdb9a9; box-sizing: border-box; }
  aside { width: 8px; margin-right: 1px; display: flex; flex-direction: column; }
  aside svg { width: 7px; height: 8px; }
  .strip { flex: 1; background: linear-gradient(#7f9fdf, #668be0); color: #dfe8fb; display: flex; align-items: flex-end; justify-content: center; overflow: hidden; }
  .strip span { writing-mode: vertical-rl; transform: rotate(180deg); font-size: 6.6px; padding-top: 1px; }
  .body { flex: 1; min-width: 0; display: flex; flex-direction: column; }
  .row { height: 12px; flex: none; display: grid; align-items: center; background: #fff; color: #222;
    grid-template-columns: 48px 83px 35px 26px 35px 37px 37px 38px 37px 37px 38px 41px 1fr; font-size: 6.5px; }
  .c { text-align: right; padding-right: 2px; box-sizing: border-box; border-right: 1px solid #dad7ca; height: 12px; line-height: 12px; }
  .c:first-child { text-align: left; padding-left: 2px; display: flex; align-items: center; }
  .header { background: #ece9d8; border-bottom: 1px solid #c7c3b2; height: 12px; font-size: 6.8px; }
  .header .c { padding-right: 3px; }
  .header .c:first-child { padding-left: 7px; }
  .sort { width: 6px; height: 6px; margin-left: 5px; }
  .doc { width: 9px; height: 10px; margin-right: 3.500px; flex: none; }
  .sel { background: #2a5fc8; color: #dfe9fb; }
  .sel .c { border-color: #6f96de; }
  .sum { background: #c6c4c4; display: flex; color: #111; height: 12.500px; padding-left: 2px; }
  .sum b { font-size: 6.6px; letter-spacing: -.015px; }
  .total { margin-left: auto; padding-right: 118px; }
  .ttabs { margin-top: 2px; border-top: 1px solid #6a6768; height: 13px; display: flex; box-sizing: border-box; color: #77756a; font-size: 6.6px; }
  .ttabs div { line-height: 11px; height: 11px; text-align: center; flex: none; background: linear-gradient(#a5a294, #a5a294) right 3px / .8px 6px no-repeat; }
  .ttabs .on { background: #fff; color: #111; border: 1px solid #555; border-top: 0; margin-top: -1px; box-sizing: border-box; }

  .status { margin-top: 1px; flex: 1; display: flex; align-items: center; border-top: 1px solid #bdb9a9; font-size: 6.700px; }
  .status > div { box-sizing: border-box; height: 10px; line-height: 10px; border-right: 1px solid #c6c2b2; flex: none; padding-left: 2px; }
  .status > div:first-child { padding-left: 0; }
  .status > .net { display: flex; align-items: center; border: 0; padding-left: 3px; gap: 13px; }
  .net svg { width: 15px; height: 8px; }
  .size { width: 9px; height: 9px; margin-left: auto; align-self: flex-end; }
</style>
